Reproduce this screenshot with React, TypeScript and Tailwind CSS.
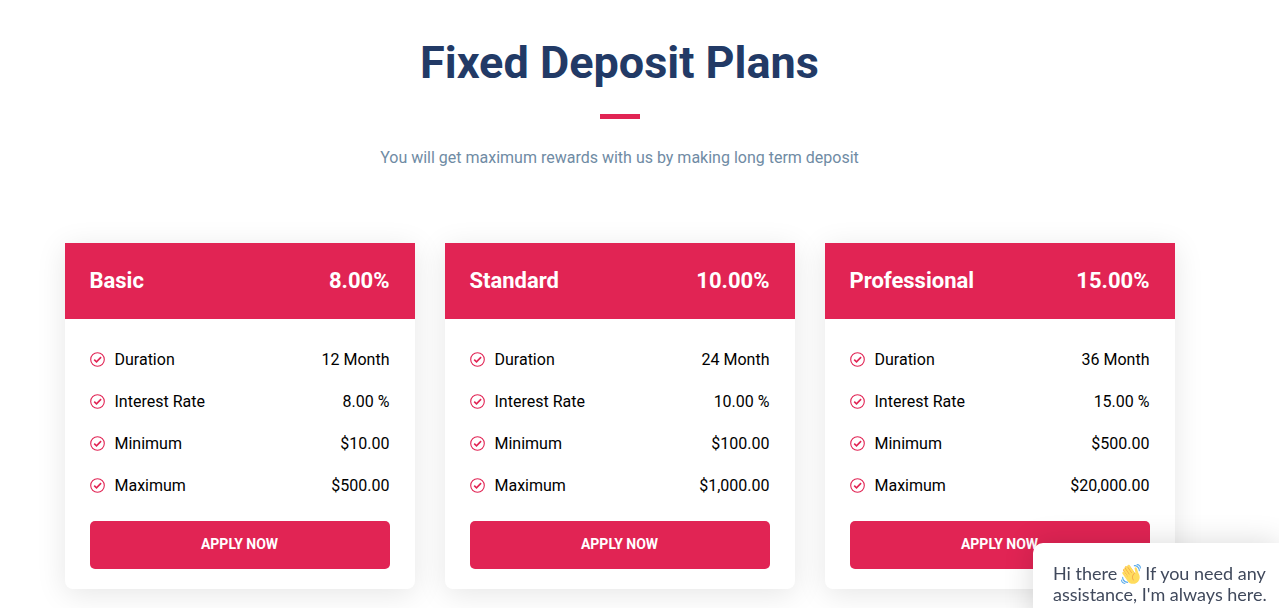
const PLANS = [
  {
    name: 'Basic',
    rate: '8.00%',
    details: [
      { label: 'Duration', value: '12 Month' },
      { label: 'Interest Rate', value: '8.00 %' },
      { label: 'Minimum', value: '$10.00' },
      { label: 'Maximum', value: '$500.00' },
    ],
  },
  {
    name: 'Standard',
    rate: '10.00%',
    details: [
      { label: 'Duration', value: '24 Month' },
      { label: 'Interest Rate', value: '10.00 %' },
      { label: 'Minimum', value: '$100.00' },
      { label: 'Maximum', value: '$1,000.00' },
    ],
  },
  {
    name: 'Professional',
    rate: '15.00%',
    details: [
      { label: 'Duration', value: '36 Month' },
      { label: 'Interest Rate', value: '15.00 %' },
      { label: 'Minimum', value: '$500.00' },
      { label: 'Maximum', value: '$20,000.00' },
    ],
  },
];

type Plan = (typeof PLANS)[number];

const CheckCircle = () => (
  <svg
    viewBox="0 0 15 15"
    fill="none"
    stroke="currentColor"
    className="size-[15px] text-[#e12454]"
    aria-hidden="true"
  >
    <circle cx="7.5" cy="7.5" r="6.8" strokeWidth="1.1" />
    <path d="M4.2 7.7l2.3 2.2 4.6-4.8" strokeWidth="1.6" />
  </svg>
);

const PlanCard = ({ plan }: { plan: Plan }) => {
  return (
    <article className="rounded-b-lg bg-white shadow-[0_5px_30px_rgba(0,0,0,0.1)]">
      <header className="flex h-[76px] items-center justify-between bg-[#e12454] px-[25px] pb-px text-[22px] font-bold text-white">
        <h3>{plan.name}</h3>
        <span>{plan.rate}</span>
      </header>
      <div className="px-[25px] pt-5 pb-5">
        <ul className="mb-[14px]">
          {plan.details.map(({ label, value }) => (
            <li
              key={label}
              className="flex h-[42px] items-center justify-between pb-px text-base text-black"
            >
              <span className="flex items-center gap-[10px]">
                <CheckCircle />
                {label}
              </span>
              <span>{value}</span>
            </li>
          ))}
        </ul>
        <button
          type="button"
          className="h-12 w-full cursor-pointer rounded-[5px] bg-[#e12454] pb-0.5 text-sm font-bold text-white uppercase"
        >
          Apply Now
        </button>
      </div>
    </article>
  );
};

const WavingHand = () => (
  <svg
    viewBox="0 0 36 36"
    className="mx-1 inline size-5 align-[-4px]"
    aria-hidden="true"
  >
    <path
      fill="#EF9645"
      d="M4.861 9.147c.94-.657 2.357-.531 3.201.166l-.968-1.407c-.779-1.111-.5-2.313.612-3.093 1.112-.777 4.263 1.312 4.263 1.312-.786-1.122-.639-2.544.483-3.331 1.122-.784 2.68-.513 3.456.611l10.292 14.72L25 31l-11.083-4.042L4.25 12.695c-.793-1.129-.519-2.686.611-3.548z"
    />
    <path
      fill="#FFDC5D"
      d="M2.695 17.336s-1.132-1.65.519-2.781c1.649-1.131 2.78.518 2.78.518l5.251 7.658c.181-.302.379-.6.6-.894L4.557 11.21s-1.131-1.649.519-2.78c1.649-1.131 2.78.518 2.78.518l6.855 9.997c.255-.208.516-.417.785-.622L7.549 6.732s-1.131-1.649.519-2.78c1.649-1.131 2.78.518 2.78.518l7.947 11.589c.292-.179.581-.334.871-.498L12.238 4.729s-1.131-1.649.518-2.78c1.649-1.131 2.78.518 2.78.518l7.854 11.454 1.194 1.742c-4.948 3.394-5.419 9.779-2.592 13.902.565.825 1.39.26 1.39.26-3.393-4.949-2.357-10.51 2.592-13.903L24.515 8.62s-.545-1.924 1.378-2.47c1.924-.545 2.47 1.379 2.47 1.379l1.685 5.004c.668 1.984 1.379 3.961 2.32 5.831 2.657 5.28 1.07 11.842-3.94 15.279-5.465 3.747-12.936 2.354-16.684-3.11L2.695 17.336z"
    />
    <g fill="#5DADEC">
      <path d="M12 32.042C8 32.042 3.958 28 3.958 24c0-.553-.405-1-.958-1s-1.042.447-1.042 1C1.958 30 6 34.042 12 34.042c.553 0 1-.489 1-1.042s-.447-.958-1-.958z" />
      <path d="M7 34c-3 0-5-2-5-5 0-.553-.447-1-1-1s-1 .447-1 1c0 4 3 7 7 7 .553 0 1-.447 1-1s-.447-1-1-1zM24 2c-.552 0-1 .448-1 1s.448 1 1 1c4 0 8 3.589 8 8 0 .552.448 1 1 1s1-.448 1-1c0-5.514-4-10-10-10z" />
      <path d="M29 .042c-.552 0-1 .406-1 .958s.448 1.042 1 1.042c3 0 4.958 2.225 4.958 4.958 0 .552.489 1 1.042 1s.958-.448.958-1C35.958 3.163 33 .042 29 .042z" />
    </g>
  </svg>
);

const ChatTeaser = () => (
  <aside className="fixed top-[543px] right-0 w-[246px] rounded-tl-[10px] bg-white pt-5 pb-5 pl-5 font-['Lato',sans-serif] text-lg leading-[21px] text-[#40495c] shadow-[0_0_30px_rgba(0,0,0,0.15)]">
    <p className="whitespace-nowrap">
      Hi there
      <WavingHand />
      If you need any
      <br />
      assistance, I'm always here.
    </p>
  </aside>
);

const App = () => {
  return (
    <main className="h-screen overflow-hidden bg-white pr-10 font-['Roboto',sans-serif]">
      <section className="mx-auto max-w-[1110px] pt-[33px]">
        <div className="flex flex-col items-center text-center">
          <h2 className="text-[45px] leading-[60px] font-bold text-[#223a66]">
            Fixed Deposit Plans
          </h2>
          <div className="mt-[21px] h-[5px] w-10 bg-[#e12454]" />
          <p className="mt-[27px] text-base leading-6 text-[#6f8ba4]">
            You will get maximum rewards with us by making long term deposit
          </p>
        </div>
        <div className="mt-[73px] grid grid-cols-3 gap-[30px]">
          {PLANS.map((plan) => (
            <PlanCard key={plan.name} plan={plan} />
          ))}
        </div>
      </section>
      <ChatTeaser />
    </main>
  );
};

export default App;
